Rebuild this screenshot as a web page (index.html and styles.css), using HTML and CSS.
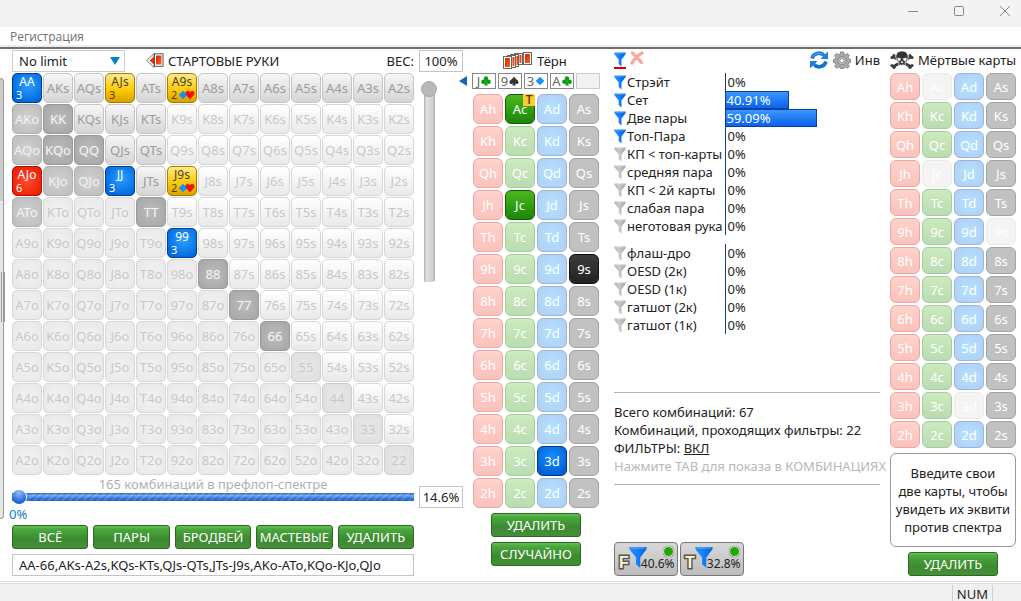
FILE: index.html
```html
<!DOCTYPE html>
<html lang="ru">
<head>
<meta charset="utf-8">
<title>Эквилятор</title>
<link rel="stylesheet" href="styles.css">
</head>
<body>
<svg class="defs" aria-hidden="true">
  <defs>
    <linearGradient id="blue" x1="0" x2="1"><stop offset="0" stop-color="#2c86f0"/><stop offset=".4" stop-color="#1484ff"/><stop offset="1" stop-color="#0a5cd8"/></linearGradient>
    <linearGradient id="gray" x1="0" x2="1"><stop offset="0" stop-color="#b0b0b0"/><stop offset=".4" stop-color="#cacaca"/><stop offset="1" stop-color="#a6a6a6"/></linearGradient>
    <linearGradient id="red" x1="0" x2="1" y2="1"><stop offset="0" stop-color="#d81e00"/><stop offset="1" stop-color="#ff6a20"/></linearGradient>
    <symbol id="funnel" viewBox="0 0 12 15"><path d="M.3.500h11.400v1.500L7.500 7.500V14.500L4.700 12V7.500L.3 2z"/><path d="M1 1.200h10" stroke="#fff" stroke-opacity=".25"/></symbol>
    <symbol id="club" viewBox="0 0 12 12"><circle cx="6" cy="3" r="2.700"/><circle cx="2.900" cy="7" r="2.700"/><circle cx="9.100" cy="7" r="2.700"/><path d="M5.200 5h1.600l.3 4 1.400 2.500h-5L4.900 9z"/></symbol>
    <symbol id="spade" viewBox="0 0 12 12"><path d="M6 .5C7 3 11.500 5 11.500 7.500c0 2.300-3 2.700-4.500 1.200L8.200 11.500H3.800L5 8.700C3.500 10.200.5 9.800.5 7.500.5 5 5 3 6 .5z"/></symbol>
    <symbol id="diamond" viewBox="0 0 12 12"><path d="M6 .8 11.200 6 6 11.200.8 6z"/></symbol>
    <symbol id="heart" viewBox="0 0 12 12"><path d="M6 11.500C4 8.500.5 6.500.5 3.700.5.8 4.700.2 6 2.800 7.300.2 11.500.8 11.500 3.700 11.500 6.500 8 8.500 6 11.500z"/></symbol>
  </defs>
</svg>

<header class="titlebar">
  <button class="win" aria-label="Свернуть"><svg width="12" height="12"><path d="M1 6.500h10"/></svg></button>
  <button class="win" aria-label="Развернуть"><svg width="12" height="12"><rect x="1.500" y="1.500" width="9" height="9" rx="1"/></svg></button>
  <button class="win" aria-label="Закрыть"><svg width="12" height="12"><path d="M1 1l10 10M11 1 1 11"/></svg></button>
</header>
<nav class="menu"><a href="#">Регистрация</a></nav>

<main class="app">
  <div class="gutter"><div class="panel-edge"></div><div class="splitter"></div></div>

  <section class="hands">
    <div class="bar">
      <label class="limit"><select aria-label="Лимит"><option>No limit</option></select></label>
      <svg class="icon back" width="18" height="16" viewBox="0 0 18 16"><path d="M8 .5.700 7.500 8 14.500z" fill="#fff" stroke="#777"/><path d="M8 3.500 3.500 7.500 8 11.500z" fill="#e83000"/><rect x="8.500" y=".8" width="8.500" height="12.500" fill="#fff" stroke="#555"/><rect x="10" y="2.500" width="5.500" height="9" fill="url(#red)"/></svg>
      <h2>СТАРТОВЫЕ РУКИ</h2>
      <label class="weight-label" for="weight">ВЕС:</label>
    </div>
    <div class="matrix" id="matrix"></div>
    <div class="combos">165 комбинаций в префлоп-спектре</div>
    <input class="range" type="range" min="0" max="100" value="0" aria-label="Размер спектра">
    <div class="zero">0%</div>
    <div class="presets">
      <button class="green">ВСЁ</button><button class="green">ПАРЫ</button><button class="green">БРОДВЕЙ</button><button class="green">МАСТЕВЫЕ</button><button class="green">УДАЛИТЬ</button>
    </div>
    <input class="field spectrum" type="text" aria-label="Спектр" value="AA-66,AKs-A2s,KQs-KTs,QJs-QTs,JTs-J9s,AKo-ATo,KQo-KJo,QJo">
  </section>

  <section class="weight">
    <input class="field" id="weight" type="text" value="100%">
    <input class="vrange" type="range" min="0" max="100" value="100" aria-label="Вес">
    <input class="field percent" type="text" aria-label="Процент рук" value="14.6%">
  </section>

  <section class="board">
    <div class="bar">
      <svg class="icon" width="30" height="18" viewBox="0 0 30 18"><g fill="#fff" stroke="#666"><rect x="11.500" y="1.500" width="8" height="11"/><rect x="7.500" y="2.500" width="8" height="12"/><rect x="4.500" y="3.500" width="8" height="12"/><rect x=".5" y="4.500" width="8" height="12"/><rect x="20.500" y=".5" width="8" height="12"/></g><g fill="url(#red)"><rect x="16.500" y="3" width="2" height="8"/><rect x="13.500" y="4" width="1.500" height="9"/><rect x="9.500" y="5" width="2" height="9"/><rect x="2" y="6" width="5" height="9"/><rect x="22" y="2" width="5" height="9"/></g></svg>
      <h2>Тёрн</h2>
    </div>
    <div class="street">
      <button class="prev" aria-label="Предыдущая улица"></button>
      <span class="slot">J<svg class="suit c"><use href="#club"/></svg></span><span class="slot">9<svg class="suit s"><use href="#spade"/></svg></span><span class="slot">3<svg class="suit d"><use href="#diamond"/></svg></span><span class="slot">A<svg class="suit c"><use href="#club"/></svg></span><span class="slot empty"></span>
    </div>
    <div class="cards" id="board"></div>
    <div class="actions"><button class="green">УДАЛИТЬ</button><button class="green">СЛУЧАЙНО</button></div>
  </section>

  <section class="stats">
    <div class="bar">
      <button class="tool active" aria-label="Фильтры"><svg class="fun on" width="12" height="15"><use href="#funnel"/></svg></button>
      <button class="tool clear" aria-label="Очистить"><svg width="14" height="14" viewBox="0 0 14 14"><path d="M2.500 2c3 3 6 5.500 9 9.500M12 2C8 4 4.500 8 2 12" stroke="#f9aa9f" stroke-width="3.400" stroke-linecap="round" fill="none"/></svg></button>
      <span class="spring"></span>
      <button class="tool" aria-label="Обновить"><svg width="20" height="20" viewBox="0 0 20 20"><g fill="none" stroke="#1473d2" stroke-width="3.600"><path d="M3 8.500A7 7 0 0 1 15 5.500"/><path d="M17 11.500A7 7 0 0 1 5 14.500"/></g><path d="M19 1.500V9h-7.500zM1 18.500V11h7.500z" fill="#1a7fe0"/><path d="M3.500 7.500A7 7 0 0 1 14 4.500" stroke="#5db2f5" fill="none"/></svg></button>
      <button class="tool" aria-label="Настройки"><svg width="18" height="18" viewBox="0 0 18 18"><g fill="#aaa" stroke="#777" stroke-width=".8"><path d="M7.500 1h3l.4 2.200 1.500.6 1.900-1.300 2.100 2.100-1.300 1.900.6 1.400 2.100.5v3l-2.100.4-.6 1.500 1.300 1.900-2.100 2.100-1.900-1.300-1.500.6-.4 1.400h-3L7 16.600l-1.400-.6-1.900 1.300-2.100-2.100 1.300-1.900-.6-1.500L.5 11.400v-3l1.800-.5.6-1.400L1.600 4.600l2.100-2.100 1.900 1.300L7 3.200z"/><circle cx="9" cy="9.700" r="4.200" fill="#c6c6c6"/><circle cx="9" cy="9.700" r="2.200" fill="#fff"/></g></svg></button>
      <a class="invert" href="#">Инв</a>
    </div>
    <table class="made" id="made"></table>
    <table class="draws" id="draws"></table>
    <div class="summary">
      <p>Всего комбинаций: 67</p>
      <p>Комбинаций, проходящих фильтры: 22</p>
      <p>ФИЛЬТРЫ: <a href="#">ВКЛ</a></p>
      <p class="hint">Нажмите TAB для показа в КОМБИНАЦИЯХ</p>
    </div>
    <div class="streets">
      <button class="chip"><b>F</b><svg class="fun on" width="18" height="23"><use href="#funnel"/></svg><span>40.6%</span><i></i></button>
      <button class="chip"><b>T</b><svg class="fun on" width="18" height="23"><use href="#funnel"/></svg><span>32.8%</span><i></i></button>
    </div>
  </section>

  <section class="dead">
    <div class="bar">
      <svg class="icon" width="24" height="18" viewBox="0 0 24 18"><g stroke="#3b3b3b" stroke-width="2.600" stroke-linecap="round"><path d="M3.500 6 20.500 15.500M20.500 6 3.500 15.500"/></g><g fill="#3b3b3b"><circle cx="2" cy="6.500" r="1.600"/><circle cx="4" cy="4.500" r="1.600"/><circle cx="22" cy="6.500" r="1.600"/><circle cx="20" cy="4.500" r="1.600"/><circle cx="2" cy="14.500" r="1.600"/><circle cx="4" cy="16.300" r="1.600"/><circle cx="22" cy="14.500" r="1.600"/><circle cx="20" cy="16.300" r="1.600"/></g><path d="M12 0c4.500 0 6.500 3 6 7l-.8 3.200-2 .8v3.500H8.800V11l-2-.8L6 7C5.500 3 7.500 0 12 0z" fill="#333" stroke="#fff" stroke-width=".7"/><path d="M7.800 7l3 .6-.8 2.200-2.200-.3zM16.200 7l-3 .6.800 2.200 2.200-.3zM12 10l1 1.700h-2zM10.500 13v1.500M12 13v1.500M13.500 13v1.500" fill="#fff" stroke="#fff" stroke-width=".5"/></svg>
      <h2>Мёртвые карты</h2>
    </div>
    <div class="cards" id="dead"></div>
    <p class="note">Введите свои<br>две карты, чтобы увидеть их эквити против спектра</p>
    <div class="actions"><button class="green">УДАЛИТЬ</button></div>
  </section>
</main>
<footer class="status"><span>NUM</span></footer>
<script src="app.js"></script>
</body>
</html>
```
FILE: app.js
```js
const ranks = "AKQJT98765432";
const suited = new Set("KQs KJs KTs QJs QTs JTs".split(" "));
const offsuit = new Set("AKo AQo ATo KJo QJo".split(" "));
const picked = { AA: ["blue", 3], JJ: ["blue", 3], "99": ["blue", 3], AJs: ["gold", 3], A9s: ["gold", 2, true], J9s: ["gold", 2, true], AJo: ["red", 6] };
const pairMark = '<svg class="suit d"><use href="#diamond"/></svg><svg class="suit h"><use href="#heart"/></svg>';

function handClass(name, row, col) {
  if (row === col) return row <= 8 ? "pair" : "pair-low";
  if (col > row) return row === 0 || suited.has(name) ? "suited-in" : "suited";
  if (name === "KQo") return "pair";
  return offsuit.has(name) ? "off-in" : "off";
}

let html = "";
for (let r = 0; r < 13; r++) {
  for (let c = 0; c < 13; c++) {
    const name = r === c ? ranks[r] + ranks[r] : c > r ? ranks[r] + ranks[c] + "s" : ranks[c] + ranks[r] + "o";
    const p = picked[name];
    html += p
      ? `<button class="hand picked ${p[0]}"><span>${name}</span><small>${p[1]}${p[2] ? pairMark : ""}</small></button>`
      : `<button class="hand ${handClass(name, r, c)}">${name}</button>`;
  }
}
document.getElementById("matrix").innerHTML = html;

function deck(id, classFor) {
  let out = "";
  for (const r of ranks) for (const s of "hcds") {
    const card = r + s;
    const state = classFor(card);
    out += `<button class="card ${s} ${state}">${card}${id === "board" && card === "Ac" ? "<em>T</em>" : ""}</button>`;
  }
  document.getElementById(id).innerHTML = out;
}
const onBoard = ["Ac", "Jc", "9s", "3d"];
deck("board", c => (onBoard.includes(c) ? "on" : ""));
deck("dead", c => (onBoard.includes(c) ? "used" : ""));

function rows(id, list) {
  document.getElementById(id).innerHTML = list.map(([label, value, on]) =>
    `<tr><th scope="row"><svg class="fun ${on ? "on" : ""}" width="12" height="15"><use href="#funnel"/></svg>${label}</th>` +
    `<td>${value ? `<div class="meter" style="width:${value}%">${value}%</div>` : "0%"}</td></tr>`).join("");
}
rows("made", [["Стрэйт", 0, 1], ["Сет", 40.91, 1], ["Две пары", 59.09, 1], ["Топ-Пара", 0, 1], ["КП &lt; топ-карты", 0], ["средняя пара", 0], ["КП &lt; 2й карты", 0], ["слабая пара", 0], ["неготовая рука", 0]]);
rows("draws", [["флаш-дро", 0], ["OESD (2к)", 0], ["OESD (1к)", 0], ["гатшот (2к)", 0], ["гатшот (1к)", 0]]);
```
FILE: styles.css
```css
* { box-sizing: border-box; margin: 0; }
body { min-height: 100vh; display: flex; flex-direction: column; background: #fff; color: #222; font: 13px/18px "Noto Sans", "Open Sans", sans-serif; }
button, input, select { font: inherit; color: inherit; margin: 0; padding: 0; border: 0; background: none; }
a { color: inherit; }
h2 { font-size: 13px; font-weight: 400; white-space: nowrap; }
.defs { position: absolute; width: 0; height: 0; }

.titlebar { height: 27px; background: #f3f3f3; display: flex; justify-content: flex-end; gap: 22px; padding: 0 4px 5px 0; }
.win { width: 24px; display: flex; align-items: center; justify-content: center; }
.win svg { fill: none; stroke: #888; }
.menu { height: 22px; padding: 0 10px; border-bottom: 2px solid #707070; box-shadow: inset 0 -2px #ededed; font: 12px/20px "Open Sans", sans-serif; color: #707070; }
.menu a { text-decoration: none; }

.app { flex: 1; display: flex; align-items: flex-start; padding: 1px 5px 4px 0; }
.bar { height: 23px; display: flex; align-items: center; padding-bottom: 1px; }
.icon { flex: none; }

.gutter { width: 12px; flex: none; align-self: stretch; display: flex; padding-top: 28px; }
.panel-edge { width: 4px; height: 441px; border: 1px solid #999; border-left: 0; border-radius: 0 6px 6px 0; background: linear-gradient(#ccc 122px, #e6e6e6 122px); }
.splitter { width: 4px; height: 50px; margin: 194px 0 0 -3px; border: 1px solid #999; border-width: 0 1px; }

.hands { flex: 1 1 402px; min-width: 402px; }
.limit { position: relative; width: 113px; height: 22px; }
.limit select { appearance: none; width: 100%; height: 100%; border: 1px solid #ccc; padding: 0 6px; background: #fff; }
.limit::after { content: ""; position: absolute; right: 5px; top: 7px; border: 5px solid transparent; border-top: 8px solid #0a80cc; border-bottom: 0; }
.back { margin: 0 4px 0 21px; }
.weight-label { margin-left: auto; }
.matrix { display: grid; grid-template-columns: repeat(13, minmax(0, 1fr)); gap: 1px; }
.hand { height: 30px; border: 1px solid #d6d6d6; border-radius: 5px; color: #c8c8c8; text-align: center; white-space: nowrap; line-height: 28px; overflow: hidden; }
.suited { background: linear-gradient(#fff, #e9e9e9); }
.suited-in { background: linear-gradient(#f6f6f6, #d5d5d5); border-color: #c4c4c4; color: #9c9c9c; }
.off { background: radial-gradient(#f2f2f2, #e8e8e8); }
.off-in { background: radial-gradient(#d0d0d0, #bdbdbd); border-color: #b0b0b0; color: #f2f2f2; }
.pair { background: radial-gradient(#bcbcbc, #a6a6a6); border-color: #989898; color: #f6f6f6; }
.pair-low { background: radial-gradient(#e9e9e9, #dedede); border-color: #cfcfcf; }
.picked { display: flex; flex-direction: column; justify-content: center; line-height: 14px; padding: 0 2px; color: #fff; }
.picked span { text-align: center; font-size: 12px; }
.picked small { display: flex; align-items: center; font-size: 11px; line-height: 12px; padding-left: 1px; }
.picked .suit { width: 10px; height: 10px; margin-left: 1px; flex: none; }
.picked .suit + .suit { margin-left: -3px; }
.blue { background: radial-gradient(circle at 55% 40%, #2ca0ff, #0068dd 80%); border-color: #043f8c; }
.gold { background: linear-gradient(#ffe98c, #fdc800 60%, #d9a000); border-color: #a67c00; color: #4d4220; }
.red { background: radial-gradient(#ff4a2c, #e81800); border-color: #b01000; }
.suit { width: 11px; height: 11px; }
.suit.c { fill: #0c9a12; } .suit.s { fill: #333; } .suit.d { fill: #1092ff; } .suit.h { fill: #f01010; }

.combos { text-align: center; color: #b0b0b0; line-height: 18px; }
.range { appearance: none; display: block; width: 100%; height: 14px; margin-top: -3px; background: repeating-linear-gradient(135deg, #ffffff22 0 2px, transparent 2px 5px) 0 center / 100% 8px no-repeat, linear-gradient(#2a63b8, #6ea4ee 30%, #2f70d8 70%, #2560bd) 0 center / 100% 8px no-repeat; border-radius: 4px; }
.range::-webkit-slider-thumb { appearance: none; width: 14px; height: 14px; border-radius: 50%; background: radial-gradient(circle at 50% 20%, #8cc0ff, #1b5fd0 75%); box-shadow: 1px 0 #fff; }
.zero { color: #0a80cc; line-height: 21px; margin-left: -3px; }
.presets { display: grid; grid-template-columns: repeat(5, 1fr); gap: 5px; margin-bottom: 5px; }
.green { height: 24px; border: 1px solid #2c6a22; border-radius: 3px; background: linear-gradient(#65c255, #4aa83c 15%, #3c8a30 60%, #468f3a); color: #fff; white-space: nowrap; }
.field { height: 22px; border: 1px solid #c4c4c4; background: #fff; padding: 0 6px; width: 100%; display: block; outline: 0; }

.weight { width: 44px; margin-left: 5px; flex: none; display: flex; flex-direction: column; }
.weight .field { padding: 0; text-align: center; }
.vrange { appearance: none; writing-mode: vertical-lr; direction: rtl; width: 16px; height: 201px; margin: 9px 2px 0; border-radius: 8px 8px 5px 5px; background: linear-gradient(90deg, #b8b8b8 1px, #e2e2e2 2px, #cfcfcf 9px, #b0b0b0) center 4px / 11px 197px no-repeat; }
.vrange::-webkit-slider-thumb { appearance: none; width: 16px; height: 16px; border-radius: 50%; background: #b9b9b9; border: 1px solid #a8a8a8; }
.percent { margin-top: 204px; }

.board { width: 128px; margin-left: 9px; flex: none; }
.board .bar { padding-left: 31px; gap: 4px; }
.street { position: relative; display: flex; justify-content: space-between; margin-bottom: 5px; }
.prev { position: absolute; left: -13px; top: 3px; border: 5px solid transparent; border-right: 8px solid #1467b8; border-left: 0; }
.slot { width: 24px; height: 16px; border: 1px solid #888; display: flex; align-items: center; justify-content: center; gap: 1px; color: #666; line-height: 14px; }
.slot .suit { width: 10px; height: 10px; flex: none; }
.slot.empty { border-color: #ccc; background: #f2f2f2; }
.cards { display: grid; grid-template-columns: repeat(4, 30px); gap: 2px; justify-content: center; }
.card { position: relative; height: 30px; border: 1px solid; border-radius: 6px; color: #fff; }
.card.h { background: linear-gradient(#ffd2cc, #fbc2bd); border-color: #eba7a4; }
.card.c { background: linear-gradient(#cbebbd, #bbdcb3); border-color: #a5cd9d; }
.card.d { background: radial-gradient(#b3e3ff, #b0cdf6); border-color: #9db6d6; }
.card.s { background: #c1c1c1; border-color: #a3a3a3; }
.card.c.on { background: linear-gradient(#4ab81c, #1b8608); border-color: #125d06; }
.card.d.on { background: radial-gradient(circle at 50% 35%, #1690ff, #0054cc); border-color: #023a80; }
.card.s.on { background: linear-gradient(#3c3c3c, #222); border-color: #111; }
.card.used { background: #f4f4f4; border-color: #eaeaea; }
.card em { position: absolute; right: -1px; top: -1px; width: 12px; height: 12px; background: #ffcc30; color: #433; font: 500 12px/12px "Noto Sans", sans-serif; }
.actions { display: flex; flex-direction: column; align-items: center; gap: 5px; margin-top: 5px; }
.actions .green { width: 90px; }

.stats { flex: 1 1 266px; min-width: 266px; margin-left: 14px; }
.stats .bar { gap: 4px; padding-bottom: 3px; }
.tool { display: flex; }
.tool.active { border-bottom: 2px solid #e00000; }
.clear { margin-bottom: 4px; }
.spring { flex: 1; }
.fun { flex: none; fill: url(#gray); }
.fun.on { fill: url(#blue); }
.invert { text-decoration: none; }
table { width: 100%; border-collapse: collapse; table-layout: fixed; }
th, td { height: 18px; padding: 0; font-weight: 400; text-align: left; white-space: nowrap; }
th { width: 111px; }
th .fun { vertical-align: -3px; margin-right: 1px; }
td { border-left: 1px solid #16407c; text-indent: 2px; }
.meter { height: 18px; border: 1px solid #0d409c; border-left: 0; background: linear-gradient(#3a98ff, #0a62ee); color: #fff; line-height: 16px; text-indent: 1px; }
.draws { margin-top: 9px; }
.summary { margin: 58px 0 57px; padding: 10px 0 9px; border: 1px solid #b4b4b4; border-width: 1px 0; white-space: nowrap; }
.hint { color: #b8b8b8; }
.streets { display: flex; gap: 2px; }
.chip { position: relative; width: 64px; height: 34px; border: 1px solid #777; border-radius: 4px; background: linear-gradient(#d8d8d8, #bdbdbd); display: flex; align-items: flex-end; padding: 0 2px 4px 4px; font-size: 12px; }
.chip b { font: 700 16px/16px "Liberation Sans", sans-serif; color: #fff3cf; -webkit-text-stroke: 3px #555; paint-order: stroke fill; }
.chip svg { align-self: center; }
.chip span { line-height: 14px; margin-left: -6px; }
.chip i { position: absolute; right: 3px; top: 3px; width: 11px; height: 11px; border-radius: 50%; border: 1px solid #eee; background: #22a800; box-shadow: 0 0 1px #333; }

.dead { width: 126px; margin-left: 10px; flex: none; }
.dead .bar { gap: 4px; padding-bottom: 3px; }
.dead .card { height: 27px; line-height: 24px; }
.note { border: 1px solid #999; border-radius: 6px; margin-top: 5px; padding: 10px 2px; text-align: center; }

.status { height: 20px; border-top: 1px solid #dcdcdc; box-shadow: inset 0 1px #fff, inset 0 2px #dcdcdc; background: #f0f0f0; display: flex; justify-content: flex-end; padding: 3px 28px 0 0; line-height: 18px; }
.status span { border: 1px solid #d0d0d0; border-width: 0 1px; padding: 0 4px; }
```
